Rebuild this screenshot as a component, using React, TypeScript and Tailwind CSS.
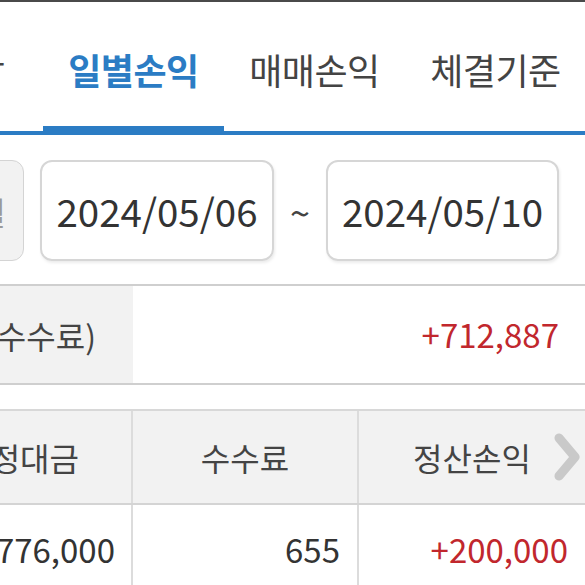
import React from "react";

const font = { fontFamily: '"Noto Sans CJK KR", "Noto Sans", sans-serif' };

function Chevron() {
  return (
    <svg width="28" height="48" viewBox="0 0 28 48" fill="none">
      <path d="M6 5 L22 24 L6 43" stroke="#c9c9c9" strokeWidth="9" strokeLinecap="round" strokeLinejoin="round" />
    </svg>
  );
}

export default function App() {
  return (
    <div
      className="w-[585px] h-[585px] overflow-hidden bg-white relative"
      style={font}
    >
      <div className="h-[2px] bg-[#4a4a4a]" />
      {/* Tabs */}
      <div className="relative h-[133px]">
        <div className="flex h-[124px] items-center pt-[10px]">
          <div className="w-[43px] shrink-0 flex justify-end pr-[39px] text-[36px] text-[#444] tracking-[-1px] whitespace-nowrap">
            종합
          </div>
          <div className="w-[181px] shrink-0 flex justify-center text-[36px] font-bold text-[#2b7cc4] tracking-[-0.5px] whitespace-nowrap">
            일별손익
          </div>
          <div className="w-[181px] shrink-0 flex justify-center text-[36px] text-[#444] tracking-[-0.5px] whitespace-nowrap">
            매매손익
          </div>
          <div className="w-[181px] shrink-0 flex justify-center text-[36px] text-[#444] tracking-[-0.5px] whitespace-nowrap">
            체결기준
          </div>
        </div>
        <div className="absolute left-0 right-0 bottom-0 h-[4px] bg-[#2b7cc4]" />
        <div className="absolute left-[43px] w-[181px] bottom-0 h-[9px] bg-[#2b7cc4]" />
      </div>

      {/* Date row */}
      <div className="flex items-center mt-[25px] h-[101px]">
        <div className="w-[24px] h-full shrink-0 flex justify-end overflow-visible">
          <div className="w-[124px] shrink-0 h-full rounded-r-[12px] border border-[#d4d4d4] bg-[#f2f2f2] flex items-center justify-end pr-[17px] text-[32px] text-[#9a9a9a] whitespace-nowrap">
            1개월
          </div>
        </div>
        <div className="ml-[16px] w-[234px] h-full shrink-0 rounded-[12px] border-2 border-[#d6d6d6] shadow-[1px_2px_3px_rgba(0,0,0,0.08)] flex items-center justify-center text-[38.5px] text-[#333]">
          2024/05/06
        </div>
        <div className="w-[52px] shrink-0 flex justify-center text-[36px] text-[#444]">~</div>
        <div className="w-[233px] h-full shrink-0 rounded-[12px] border-2 border-[#d6d6d6] shadow-[1px_2px_3px_rgba(0,0,0,0.08)] flex items-center justify-center text-[38.5px] text-[#333]">
          2024/05/10
        </div>
      </div>

      {/* Summary row */}
      <div className="mt-[23px] border-t-2 border-b-2 border-[#cfcfcf] flex h-[101px]">
        <div className="w-[133px] shrink-0 bg-[#f2f2f2] flex items-center justify-end pr-[37px] text-[32px] text-[#444] whitespace-nowrap">
          손익(수수료)
        </div>
        <div className="flex-1 flex items-center justify-end pr-[26px] text-[33px] text-[#c1272d]">
          +712,887
        </div>
      </div>

      {/* Table */}
      <div className="mt-[24px] border-t-2 border-[#d8d8d8]">
        <div className="flex h-[94px] bg-[#f2f2f2] border-b-2 border-[#d4d4d4]">
          <div className="w-[133px] shrink-0 flex items-center justify-end pr-[52px] text-[32px] text-[#444] whitespace-nowrap border-r-2 border-[#dcdcdc]">
            약정대금
          </div>
          <div className="w-[226px] shrink-0 flex items-center justify-center text-[32px] text-[#444] border-r-2 border-[#dcdcdc]">
            수수료
          </div>
          <div className="flex-1 relative flex items-center justify-center text-[32px] text-[#444]">
            정산손익
            <div className="absolute right-[4px] top-1/2 -translate-y-1/2">
              <Chevron />
            </div>
          </div>
        </div>
        <div className="flex h-[90px]">
          <div className="w-[133px] shrink-0 flex items-center justify-end pr-[16px] text-[33px] text-[#333] whitespace-nowrap border-r-2 border-[#dcdcdc]">
            1,776,000
          </div>
          <div className="w-[226px] shrink-0 flex items-center justify-end pr-[17px] text-[33px] text-[#333] border-r-2 border-[#dcdcdc]">
            655
          </div>
          <div className="flex-1 flex items-center justify-end pr-[17px] text-[33px] text-[#c1272d]">
            +200,000
          </div>
        </div>
      </div>
    </div>
  );
}
